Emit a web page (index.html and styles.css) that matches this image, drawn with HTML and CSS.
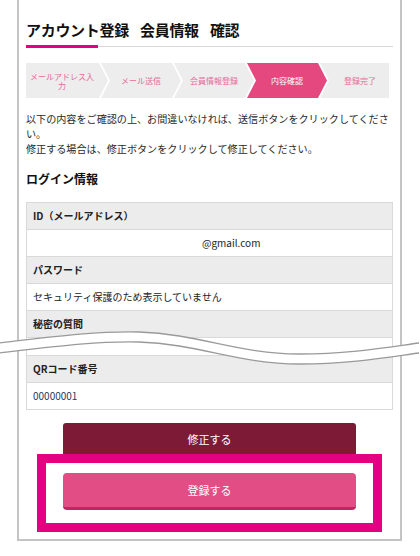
FILE: index.html
```html
<!DOCTYPE html>
<html lang="ja">
<head>
  <meta charset="UTF-8" />
  <title>アカウント登録 会員情報 確認</title>
  <link rel="stylesheet" href="styles.css">
</head>
<body>
  <div class="card">
    <h1 class="page-title">アカウント登録 会員情報 確認</h1>
    <div class="title-line"></div>

    <div class="steps">
      <div class="step first">メールアドレス入力</div>
      <div class="step">メール送信</div>
      <div class="step">会員情報登録</div>
      <div class="step active">内容確認</div>
      <div class="step">登録完了</div>
    </div>

    <p class="lead">以下の内容をご確認の上、お間違いなければ、送信ボタンをクリックしてください。<br/>修正する場合は、修正ボタンをクリックして修正してください。</p>

    <h2 class="section-title">ログイン情報</h2>

    <div class="info-table">
      <div class="row head">ID（メールアドレス）</div>
      <div class="row"><span class="mail-domain">@gmail.com</span></div>
      <div class="row head">パスワード</div>
      <div class="row">セキュリティ保護のため表示していません</div>
      <div class="row head">秘密の質問</div>
      <div class="row cut"></div>
      <div class="row head">QRコード番号</div>
      <div class="row qr">00000001</div>

      <!-- page break wave -->
      <svg class="wave" width="420" height="45" viewBox="0 0 420 45">
        <path d="M0,17 C60,10 100,5 140,6 C200,8 240,28 300,28 C350,28 390,21 420,17 L420,27 C390,31 350,38 300,38 C240,38 200,18 140,16 C100,15 60,20 0,27 Z" fill="#fff"/>
        <path d="M0,17 C60,10 100,5 140,6 C200,8 240,28 300,28 C350,28 390,21 420,17" fill="none" stroke="#9a9a9a" stroke-width="1.3"/>
        <path d="M0,27 C60,20 100,15 140,16 C200,18 240,38 300,38 C350,38 390,31 420,27" fill="none" stroke="#9a9a9a" stroke-width="1.3"/>
      </svg>
    </div>

    <button class="btn btn-fix">修正する</button>
    <div class="highlight">
      <button class="btn btn-submit">登録する</button>
    </div>
  </div>
</body>
</html>
```

FILE: styles.css
```css
body {
  margin: 0;
  background: #fff;
  color: #222;
  font-family: "Noto Sans CJK JP", "Noto Sans", sans-serif;
  text-spacing-trim: space-all;
}

.card {
  width: 367px;
  margin-left: 17px;
  padding: 20px 7px 7px 7px;
  border: 2px solid #c4c4c4;
  border-top: none;
}

.page-title {
  margin: 0;
  font-size: 15px;
  line-height: 20px;
  font-weight: bold;
  letter-spacing: -0.3px;
  word-spacing: 8px;
  color: #111;
}

.title-line {
  height: 3px;
  margin-top: 5px;
  background:
    linear-gradient(#e4007f, #e4007f) no-repeat 0 0 / 72px 3px,
    linear-gradient(#d8d8d8, #d8d8d8) no-repeat 0 1px / 100% 1px;
}

.steps {
  display: flex;
  width: 363px;
  height: 35px;
  margin-top: 15px;
  overflow: hidden;
}

.step {
  flex: 0 0 80px;
  display: flex;
  align-items: center;
  justify-content: center;
  box-sizing: border-box;
  padding: 0 10px;
  margin-left: -7px;
  background: #ededed;
  color: #e66b98;
  font-size: 8px;
  line-height: 9px;
  text-align: center;
  clip-path: polygon(0 0, calc(100% - 9px) 0, 100% 50%, calc(100% - 9px) 100%, 0 100%, 9px 50%);
}

.step.first {
  flex-basis: 82px;
  margin-left: 0;
  padding: 0 12px 0 2px;
  clip-path: polygon(0 0, calc(100% - 9px) 0, 100% 50%, calc(100% - 9px) 100%, 0 100%);
}

.step.active {
  background: #e4487f;
  color: #fff;
}

.lead {
  margin: 13px 0 0 0;
  font-size: 10.1px;
  line-height: 15px;
  color: #2a2a2a;
}

.section-title {
  margin: 14px 0 0 0;
  font-size: 12px;
  line-height: 18px;
  font-weight: bold;
  color: #111;
}

.info-table {
  position: relative;
  width: 365px;
  margin-top: 14px;
  border: 1px solid #d9d9d9;
  border-bottom: none;
}

.row {
  height: 26px;
  line-height: 26px;
  padding-left: 6px;
  border-bottom: 1px solid #d9d9d9;
  font-size: 10px;
  color: #222;
}

.row.head {
  background: #ececec;
  font-weight: bold;
}

.row.cut {
  height: 17px;
}

.mail-domain {
  margin-left: 169px;
}

.row.qr {
  color: #1f3b5a;
}

.wave {
  position: absolute;
  left: -28px;
  top: 123px;
}

.btn {
  display: block;
  width: 293px;
  margin: 0 auto;
  border: none;
  color: #fff;
  font-family: inherit;
  font-size: 11px;
  cursor: pointer;
}

.btn-fix {
  height: 31px;
  margin-top: 13px;
  background: #7d1b37;
  border-radius: 3px 3px 0 0;
}

.highlight {
  width: 327px;
  margin: 0 auto;
  padding: 10px 0 13px 0;
  border: 9px solid #e4007f;
}

.btn-submit {
  height: 37px;
  background: #e34d85;
  border-bottom: 3px solid #c2255f;
  border-radius: 4px;
}
```
